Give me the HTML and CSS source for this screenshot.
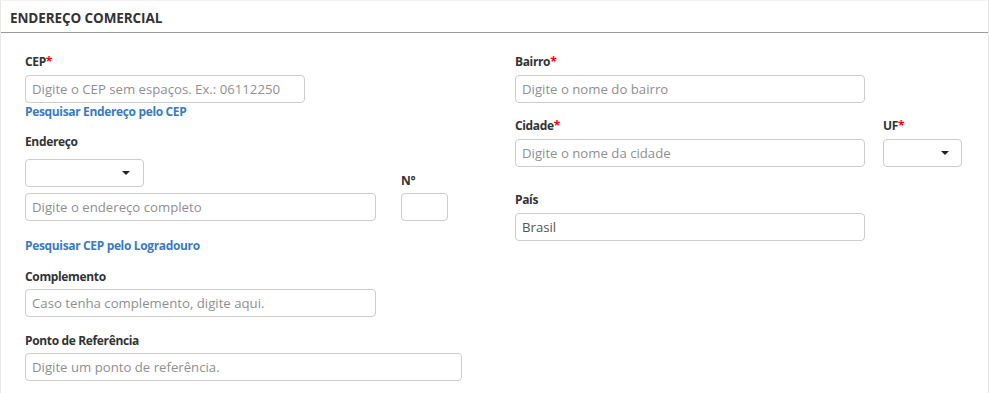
FILE: index.html
```html
<!DOCTYPE html>
<html lang="pt-BR">
<head>
<meta charset="utf-8">
<title>Endereço Comercial</title>
<link rel="stylesheet" href="styles.css">
</head>
<body>
<div class="panel">
  <div class="panel-head">
    <h3 class="panel-title">ENDEREÇO COMERCIAL</h3>
  </div>
  <div class="panel-body">
    <div class="col col-left">
      <div class="field">
        <label class="lbl">CEP<span class="req">*</span></label>
        <input class="inp w-cep" type="text" placeholder="Digite o CEP sem espaços. Ex.: 06112250">
      </div>
      <a class="link" href="#">Pesquisar Endereço pelo CEP</a>

      <div class="addr-row">
        <div class="field">
          <label class="lbl">Endereço</label>
          <div class="select w-sel"><span class="caret"></span></div>
          <input class="inp w-addr addr-input" type="text" placeholder="Digite o endereço completo">
        </div>
        <div class="field num-field">
          <label class="lbl lbl-tight">N°</label>
          <input class="inp w-num" type="text">
        </div>
      </div>
      <a class="link link-log" href="#">Pesquisar CEP pelo Logradouro</a>

      <div class="field f-comp">
        <label class="lbl lbl-tight">Complemento</label>
        <input class="inp w-addr" type="text" placeholder="Caso tenha complemento, digite aqui.">
      </div>

      <div class="field f-ref">
        <label class="lbl lbl-tight">Ponto de Referência</label>
        <input class="inp w-ref" type="text" placeholder="Digite um ponto de referência.">
      </div>
    </div>

    <div class="col col-right">
      <div class="field">
        <label class="lbl">Bairro<span class="req">*</span></label>
        <input class="inp w-right" type="text" placeholder="Digite o nome do bairro">
      </div>
      <div class="city-row">
        <div class="field">
          <label class="lbl">Cidade<span class="req">*</span></label>
          <input class="inp w-right" type="text" placeholder="Digite o nome da cidade">
        </div>
        <div class="field">
          <label class="lbl">UF<span class="req">*</span></label>
          <div class="select w-uf uf-select"><span class="caret"></span></div>
        </div>
      </div>
      <div class="field f-pais">
        <label class="lbl">País</label>
        <input class="inp w-right" type="text" value="Brasil">
      </div>
    </div>
  </div>
</div>
</body>
</html>
```

FILE: styles.css
```css
* { box-sizing: border-box; }

html, body {
  margin: 0;
  padding: 0;
  background: #ffffff;
}

body {
  font-family: "Open Sans", "Noto Sans", "Liberation Sans", sans-serif;
  color: #333333;
}

.panel {
  width: 989px;
  height: 393px;
  border-left: 1px solid #e8e8e8;
  border-right: 1px solid #e8e8e8;
  border-top: 1px solid #f2f2f2;
}

.panel-head {
  height: 32px;
  border-bottom: 1px solid #9a9a9a;
  padding-left: 9px;
}

.panel-title {
  margin: 0;
  padding-top: 8px;
  font-size: 13.5px;
  line-height: 18px;
  font-weight: 700;
  color: #333333;
  letter-spacing: -0.1px;
}

.panel-body {
  display: grid;
  grid-template-columns: 490px 1fr;
  padding: 20px 0 0 24px;
}

.col {
  display: flex;
  flex-direction: column;
  align-items: flex-start;
}

.field {
  display: flex;
  flex-direction: column;
  align-items: flex-start;
}

.lbl {
  font-size: 12px;
  line-height: 17px;
  font-weight: 700;
  color: #333333;
  margin-bottom: 5px;
  letter-spacing: -0.35px;
}

.lbl-tight { margin-bottom: 4px; }

.req { color: #ff0000; }

.inp {
  height: 28px;
  border: 1px solid #cccccc;
  border-radius: 4px;
  padding: 0 6px;
  font-family: "Open Sans", "Noto Sans", "Liberation Sans", sans-serif;
  font-size: 13.2px;
  color: #555555;
  background: #ffffff;
  outline: none;
  margin: 0;
}

.inp::placeholder { color: #8f8f8f; opacity: 1; }

.select {
  height: 28px;
  border: 1px solid #cccccc;
  border-radius: 4px;
  background: #ffffff;
  display: flex;
  align-items: center;
  justify-content: flex-end;
  padding-right: 13px;
}

.uf-select { padding-right: 12px; }

.caret {
  width: 0;
  height: 0;
  border-left: 4px solid transparent;
  border-right: 4px solid transparent;
  border-top: 4px solid #222222;
}

.w-cep { width: 280px; }
.w-sel { width: 119px; margin-top: 4px; }
.w-addr { width: 351px; }
.w-num { width: 47px; }
.w-ref { width: 437px; }
.w-right { width: 350px; }
.w-uf { width: 79px; }

.addr-input { margin-top: 6px; }

.link {
  display: block;
  font-size: 12px;
  line-height: 17px;
  font-weight: 700;
  color: #3a7bbf;
  text-decoration: none;
  letter-spacing: -0.35px;
}

.addr-row {
  display: flex;
  align-items: flex-end;
  gap: 25px;
  margin-top: 13px;
}

.link-log { margin-top: 16px; }

.f-comp { margin-top: 14px; }
.f-ref { margin-top: 15px; }

.city-row {
  display: flex;
  gap: 18px;
  margin-top: 14px;
}

.f-pais { margin-top: 24px; }
```
